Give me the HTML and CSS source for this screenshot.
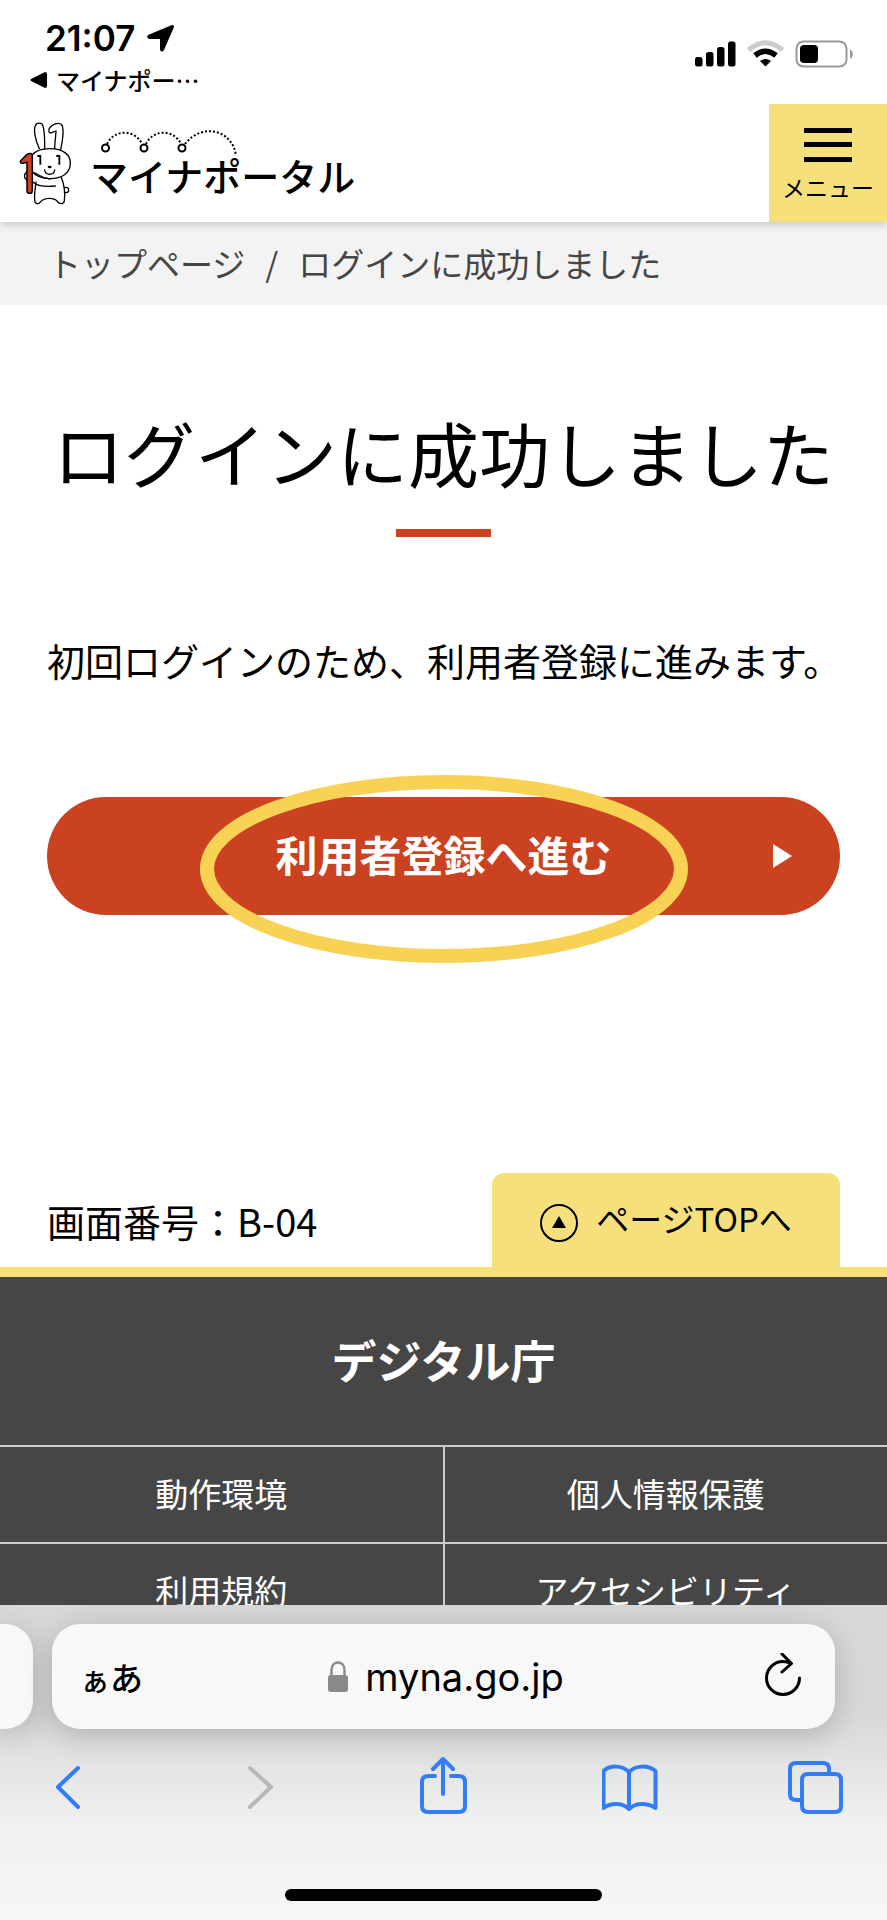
FILE: index.html
```html
<!DOCTYPE html>
<html lang="ja">
<head>
<meta charset="utf-8">
<meta name="viewport" content="width=device-width, initial-scale=1">
<title>ログインに成功しました | マイナポータル</title>
<link rel="stylesheet" href="styles.css">
</head>
<body>
<div class="status">
  <div class="status-left">
    <div class="clock">21:07
      <svg class="icon-location" viewBox="0 0 27 27" aria-hidden="true"><path d="M25 0Q27 0 27 2L17 25Q15 28 13 25V14H2Q-1 12 1 10Z"/></svg>
    </div>
    <a class="back-app" href="#">
      <svg class="icon-back-app" viewBox="0 0 17 16" aria-hidden="true"><path d="M15 0Q17 0 17 2V14Q17 16 15 16L1 9Q0 8 1 7Z"/></svg>
      <span>マイナポー…</span>
    </a>
  </div>
  <svg class="status-icons" viewBox="0 0 160 28" role="img" aria-label="電波、Wi-Fi、バッテリー">
    <rect x="0" y="17" width="7.500" height="9.500" rx="2.500"/><rect x="11" y="12" width="7.500" height="14.500" rx="2.500"/><rect x="22" y="7" width="7.500" height="19.500" rx="2.500"/><rect x="33" y="1.500" width="7.500" height="25" rx="2.500"/>
    <path d="M53.500 10Q70.500 -4.500 87.500 10" fill="none" stroke="#ccc" stroke-width="5"/>
    <path d="M60 15.500Q70.500 7 81 15.500" fill="none" stroke="#000" stroke-width="5.500"/>
    <path d="M65 21Q70.500 17 76 21L70.500 26.500Z"/>
    <rect x="101.500" y="1.500" width="50" height="25" rx="7" fill="none" stroke="#999" stroke-width="2"/>
    <rect x="105" y="5" width="18" height="18" rx="4"/>
    <path d="M155 9Q158 11 158 14T155 19Z" fill="#999"/>
  </svg>
</div>

<div class="page">
  <header class="header">
    <a class="logo" href="#">
      <svg class="rabbit" viewBox="54 60 162 258" aria-hidden="true">
        <g fill="#fff" stroke="#000" stroke-width="4" stroke-linecap="round" stroke-linejoin="round">
          <circle cx="198" cy="270" r="8"/>
          <path d="M118 146C106 120 100 90 106 77C110 67 126 67 129 78C135 98 134 125 134 146"/>
          <path d="M182 149C188 122 192 94 187 77C181 65 158 70 148 85C143 95 149 101 155 98L168 93C167 112 164 130 164 147"/>
          <path d="M108 246C104 275 101 300 106 308C110 313 118 312 122 305C134 292 162 292 172 304C178 313 190 314 193 303C195 285 193 255 184 232"/>
          <path d="M97 165C110 147 135 146 150 146C190 146 212 165 211 190C211 220 185 236 150 236C125 236 108 230 97 215"/>
          <path d="M98 218C112 217 118 234 150 237M98 246C112 258 140 261 166 258" fill="none"/>
          <path d="M80 217C71 221 72 236 80 239"/>
          <path d="M62 182L81 163Q97 156 97 168V272Q97 280 89 280Q81 280 81 272V187L69 190Q58 191 62 182Z" fill="#cb4221" stroke-width="4.500"/>
          <path d="M112 168H121V194M169 168H178V194" fill="none" stroke-width="5.500" stroke-linecap="butt" stroke-linejoin="miter"/>
          <path d="M134 210C136 227 162 227 164 210" fill="none"/>
        </g>
        <ellipse cx="149" cy="201" rx="6" ry="4"/>
      </svg>
      <span class="wordmark">マイナポータル
        <svg class="arcs" viewBox="0 0 142 38" aria-hidden="true">
          <g fill="none" stroke="#000" stroke-width="2" stroke-dasharray="2 2"><path d="M6 14C13 -1 34 -1 41 14"/><path d="M45 14C52 -1 73 -1 80 14"/><path d="M84 14C101 -8 132 0 135 26"/></g>
          <g fill="#fff" stroke="#000" stroke-width="2"><circle cx="4.500" cy="18" r="3.500"/><circle cx="43" cy="18" r="3.500"/><circle cx="81" cy="18" r="3.500"/></g>
        </svg>
      </span>
    </a>
    <button class="menu" type="button">
      <svg class="icon-menu" viewBox="0 0 48 34" aria-hidden="true"><path d="M0 0H48V5H0ZM0 14H48V19H0ZM0 29H48V34H0Z"/></svg>
      <span>メニュー</span>
    </button>
  </header>

  <nav class="breadcrumb" aria-label="パンくずリスト">
    <a href="#">トップページ</a><span>/</span><span>ログインに成功しました</span>
  </nav>

  <main class="main">
    <h1 class="title">ログインに成功しました</h1>
    <p class="lead">初回ログインのため、利用者登録に進みます。</p>
    <div class="action">
      <button class="proceed" type="button">
        利用者登録へ進む
        <svg class="icon-play" viewBox="0 0 19 24" aria-hidden="true"><path d="M0 0L19 12L0 24Z"/></svg>
      </button>
      <svg class="marker" viewBox="0 0 488 188" aria-hidden="true"><ellipse cx="244" cy="94" rx="237" ry="87"/></svg>
    </div>
  </main>

  <div class="page-end">
    <p class="screen-no">画面番号：B-04</p>
    <a class="to-top" href="#">
      <svg class="icon-top" viewBox="0 0 38 38" aria-hidden="true"><circle cx="19" cy="19" r="18" fill="none" stroke="#000" stroke-width="2"/><path d="M19 12L26 24H12Z"/></svg>
      <span>ページTOPへ</span>
    </a>
  </div>

  <footer class="footer">
    <p class="agency">デジタル庁</p>
    <nav class="links">
      <a href="#">動作環境</a><a href="#">個人情報保護</a>
      <a href="#">利用規約</a><a href="#">アクセシビリティ</a>
    </nav>
  </footer>
</div>

<div class="browser">
  <div class="tabs">
    <div class="tab-previous"></div>
    <div class="address">
      <button class="plain" type="button" aria-label="表示設定">ぁ<span class="kana-large">あ</span></button>
      <button class="plain url" type="button">
        <svg class="icon-lock" viewBox="0 0 22 32" aria-hidden="true"><path d="M4.500 15V9C4.500 -1 17.500 -1 17.500 9V15" fill="none" stroke="#8a8a8c" stroke-width="2.500"/><rect x="1" y="14" width="20" height="17" rx="3" fill="#8a8a8c"/></svg>
        <span>myna.go.jp</span>
      </button>
      <button class="plain" type="button" aria-label="再読み込み">
        <svg class="icon-reload" viewBox="0 0 38 44" aria-hidden="true"><path d="M35.500 25A16.500 16.500 0 1 1 19 8.500Q23 8.500 27 10.500M18 1L27.500 10.500L18 19"/></svg>
      </button>
    </div>
  </div>
  <div class="toolbar">
    <button class="plain" type="button" aria-label="戻る"><svg class="tool" viewBox="0 0 56 60"><path d="M36 12L16 31L36 51"/></svg></button>
    <button class="plain" type="button" aria-label="進む" disabled><svg class="tool" viewBox="0 0 56 60"><path d="M21 12L42 31L21 51"/></svg></button>
    <button class="plain" type="button" aria-label="共有"><svg class="tool" viewBox="0 0 56 60"><path d="M20 20H13Q7 20 7 26V50Q7 56 13 56H44Q50 56 50 50V26Q50 20 44 20H36M28 38V4M18 13L28 3L38 13"/></svg></button>
    <button class="plain" type="button" aria-label="ブックマーク"><svg class="tool" viewBox="0 0 56 60"><path d="M27 16C20 9 8 9 1.500 15V52C8 47 20 46 27 53C34 46 46 47 53.500 52V15C46 9 34 9 27 16V53"/></svg></button>
    <button class="plain" type="button" aria-label="タブ"><svg class="tool" viewBox="0 0 56 60"><path d="M14 44H8Q2 44 2 38V13Q2 7 8 7H35Q41 7 41 13V18M20 18H47Q53 18 53 24V50Q53 56 47 56H20Q14 56 14 50V24Q14 18 20 18Z"/></svg></button>
  </div>
  <div class="home-indicator"></div>
</div>
</body>
</html>
```

FILE: styles.css
```css
* {
  box-sizing: border-box;
}

body {
  margin: 0;
  height: 100vh;
  display: flex;
  flex-direction: column;
  overflow: hidden;
  background: #fff;
  color: #000;
  font-family: "Noto Sans CJK JP", sans-serif;
}

p,
h1 {
  margin: 0;
}

a {
  color: inherit;
  text-decoration: none;
}

button {
  border: 0;
  padding: 0;
  color: inherit;
  font: inherit;
}

svg {
  display: block;
  flex: none;
}

/* Status bar */
.status {
  height: 104px;
  flex: none;
  display: flex;
  justify-content: space-between;
  padding: 20px 32px 0 30px;
}

.clock {
  display: flex;
  align-items: center;
  gap: 12px;
  padding-left: 15px;
  font: 600 35px/36px Inter, sans-serif;
}

.icon-location {
  width: 27px;
  height: 27px;
}

.back-app {
  display: flex;
  align-items: center;
  gap: 9px;
  margin-top: 8px;
  font-size: 24px;
  font-weight: 500;
  line-height: 32px;
}

.icon-back-app {
  width: 17px;
  height: 16px;
}

.status-icons {
  width: 160px;
  height: 28px;
  margin-top: 20px;
}

/* Site page */
.page {
  flex: 1;
  min-height: 0;
  overflow: hidden;
}

.header {
  position: relative;
  height: 118px;
  display: flex;
  justify-content: space-between;
  box-shadow: 0 2px 8px #0003;
}

.logo {
  display: flex;
  gap: 18px;
  padding: 16px 0 0 18px;
}

.rabbit {
  width: 54px;
  height: 86px;
}

.wordmark {
  position: relative;
  padding-top: 31px;
  font-size: 38px;
  font-weight: 500;
  line-height: 48px;
}

.arcs {
  position: absolute;
  left: 11px;
  top: 10px;
  width: 142px;
  height: 38px;
}

.menu {
  width: 118px;
  background: #f6e07c;
  display: flex;
  flex-direction: column;
  align-items: center;
  gap: 9px;
  padding-top: 24px;
  font-size: 23px;
  line-height: 32px;
}

.icon-menu {
  width: 48px;
  height: 34px;
}

.breadcrumb {
  display: flex;
  gap: 20px;
  padding: 17px 48px 18px;
  background: #f3f3f3;
  color: #464646;
  font-size: 33px;
  line-height: 48px;
}

.main {
  padding: 98px 47px 0;
}

.title {
  font-size: 71px;
  font-weight: 400;
  line-height: 96px;
  text-align: center;
  white-space: nowrap;
}

.title::after {
  content: "";
  display: block;
  width: 95px;
  height: 8px;
  margin: 30px auto 0;
  background: #cb4221;
}

.lead {
  margin-top: 95px;
  font-size: 38px;
  line-height: 56px;
  white-space: nowrap;
}

.action {
  position: relative;
  margin-top: 109px;
}

.proceed {
  position: relative;
  display: block;
  width: 100%;
  height: 118px;
  padding-bottom: 6px;
  border-radius: 59px;
  background: #cb4221;
  color: #fff;
  font-size: 42px;
  font-weight: 700;
}

.icon-play {
  position: absolute;
  right: 48px;
  top: 47px;
  width: 19px;
  height: 24px;
  fill: #fff;
}

.marker {
  position: absolute;
  left: 50%;
  top: -22px;
  width: 488px;
  height: 188px;
  margin-left: -244px;
  fill: none;
  stroke: #f8d254;
  stroke-width: 14px;
  pointer-events: none;
}

.page-end {
  display: flex;
  justify-content: space-between;
  align-items: flex-end;
  margin-top: 258px;
  padding: 0 47px;
  border-bottom: 10px solid #f6e07c;
}

.screen-no {
  padding-bottom: 18px;
  font-size: 38px;
  line-height: 56px;
}

.to-top {
  width: 348px;
  height: 94px;
  display: flex;
  justify-content: center;
  align-items: flex-end;
  gap: 18px;
  padding-bottom: 25px;
  border-radius: 12px 12px 0 0;
  background: #f6e07c;
  font-size: 33px;
  line-height: 48px;
}

.icon-top {
  width: 38px;
  height: 38px;
}

.footer {
  background: #464646;
  color: #fff;
}

.agency {
  padding: 51px 0 53px;
  font-size: 45px;
  font-weight: 700;
  line-height: 64px;
  text-align: center;
}

.links {
  display: grid;
  grid-template-columns: 1fr 1fr;
  gap: 2px;
  padding-top: 2px;
  background: #ccc;
}

.links a {
  padding: 22px 0 25px;
  background: #464646;
  font-size: 33px;
  line-height: 48px;
  text-align: center;
}

/* Browser controls */
.browser {
  height: 315px;
  flex: none;
  overflow: hidden;
  padding-top: 19px;
  background: linear-gradient(#d8d8d8, #d8d8d8 35%, #e2e3e3 50%, #f1f1f1 70%, #f6f6f6);
}

.tabs {
  display: flex;
  gap: 19px;
  padding-right: 52px;
}

.tab-previous,
.address {
  height: 105px;
  background: #f8f8f8;
  box-shadow: 0 6px 30px #0003;
}

.tab-previous {
  width: 33px;
  border-radius: 0 28px 28px 0;
}

.address {
  flex: 1;
  display: flex;
  justify-content: space-between;
  align-items: center;
  padding: 0 33px 0 28px;
  border-radius: 28px;
}

.plain {
  background: none;
  font-size: 30px;
  font-weight: 500;
}

.kana-large {
  font-size: 33px;
}

.url {
  display: flex;
  align-items: center;
  gap: 16px;
  margin-right: 16px;
  font: 400 38px/48px Inter, sans-serif;
}

.icon-lock {
  width: 22px;
  height: 32px;
}

.icon-reload {
  width: 38px;
  height: 44px;
  margin-bottom: 4px;
  fill: none;
  stroke: #000;
  stroke-width: 3px;
  stroke-linecap: round;
  stroke-linejoin: round;
}

.toolbar {
  display: flex;
  justify-content: space-between;
  padding: 27px 43px 0 42px;
}

.tool {
  width: 56px;
  height: 60px;
  fill: none;
  stroke: #347cf6;
  stroke-width: 4px;
  stroke-linecap: round;
  stroke-linejoin: round;
}

.plain:disabled .tool {
  stroke: #b7b7b7;
}

.home-indicator {
  width: 317px;
  height: 12px;
  margin: 73px auto 0;
  border-radius: 6px;
  background: #000;
}
```
